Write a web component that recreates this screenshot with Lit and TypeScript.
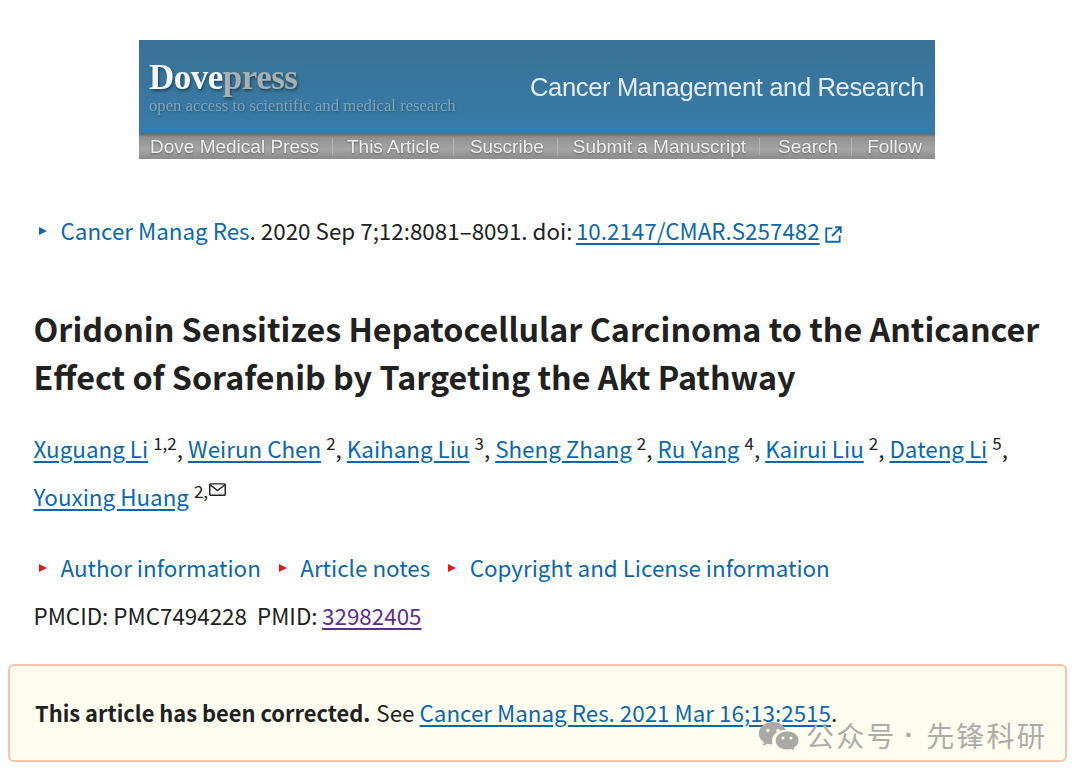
import { LitElement, css, html } from 'lit';
import { customElement } from 'lit/decorators.js';

const authors = [
	['Xuguang Li', '1,2'],
	['Weirun Chen', '2'],
	['Kaihang Liu', '3'],
	['Sheng Zhang', '2'],
	['Ru Yang', '4'],
	['Kairui Liu', '2'],
	['Dateng Li', '5'],
];

@customElement('app-root')
export class AppRoot extends LitElement {
	protected arrow(red = false) {
		return html`<span class="arrow ${red ? 'red' : ''}"></span>`;
	}

	protected banner() {
		const nav = ['Dove Medical Press', 'This Article', 'Suscribe', 'Submit a Manuscript', 'Search', 'Follow'];
		return html`<div class="banner">
			<div class="banner-top">
				<div class="brand">
					<div class="logo"><span>Dove</span><span class="press">press</span></div>
					<div class="tagline">open access to scientific and medical research</div>
				</div>
				<div class="journal">Cancer Management and Research</div>
			</div>
			<div class="banner-nav">${nav.map((n) => html`<span>${n}</span>`)}</div>
		</div>`;
	}

	render() {
		return html`<div class="page">
			${this.banner()}
			<div class="citation">
				${this.arrow()}<a class="plain">Cancer Manag Res</a>. 2020 Sep 7;12:8081–8091. doi:&nbsp;<a class="doi">10.2147/CMAR.S257482</a>
				<svg class="ext" viewBox="0 0 16 16" width="17" height="17" fill="none" stroke="#0a68ae" stroke-width="1.7">
					<path d="M7 2.200H1.200v12.600h12.600V9" />
					<path d="M9.500 1.200h5.300v5.300M14.600 1.400 6.500 9.500" />
				</svg>
			</div>
			<h1>Oridonin Sensitizes Hepatocellular Carcinoma to the Anticancer Effect of Sorafenib by Targeting the Akt Pathway</h1>
			<div class="authors">
				${authors.map(([n, s]) => html`<a>${n}</a> <sup>${s}</sup>, `)}
				<a>Youxing Huang</a> <sup>2,<svg class="mail" viewBox="0 0 16 12" width="17" height="13" fill="none" stroke="#212121" stroke-width="1.4">
					<rect x="0.7" y="0.7" width="14.6" height="10.6" rx="0.8" />
					<path d="M1 1.500l7 5.500 7-5.500" />
				</svg></sup>
			</div>
			<div class="meta">
				<span class="item">${this.arrow(true)}<a class="plain">Author information</a></span>
				<span class="item">${this.arrow(true)}<a class="plain">Article notes</a></span>
				<span class="item">${this.arrow(true)}<a class="plain">Copyright and License information</a></span>
			</div>
			<div class="ids">PMCID: PMC7494228&nbsp; PMID: <a class="visited">32982405</a></div>
			<div class="notice">
				<b>This article has been corrected.</b> See <a>Cancer Manag Res. 2021 Mar 16;13:2515</a>.
			</div>
			<div class="watermark">
				<svg viewBox="0 0 42 30" width="42" height="30" fill="#a9a9a5">
					<path d="M15 1C7 1 .8 6 .8 12.500c0 3.700 2 6.700 5.300 8.900L4.800 25l4.600-2.300c1.800.5 3.500.7 5.200.7-.4-1.200-.6-2.300-.6-3.500 0-6 5.600-10.800 12.600-10.800h1C26.300 4.500 21.200 1 15 1z" />
					<path d="M41 19.500c0-5.500-5.400-9.500-11.800-9.500-6.800 0-12 4.200-12 9.500s5.200 9.500 12 9.500c1.400 0 2.800-.2 4-.6l3.800 2-1-3.200c3.100-2 5-4.800 5-7.700z" stroke="#fffdf0" stroke-width="1" />
					<circle cx="10" cy="9.500" r="1.800" fill="#fffdf0" />
					<circle cx="20" cy="9.500" r="1.800" fill="#fffdf0" />
					<circle cx="25" cy="17" r="1.500" fill="#fffdf0" />
					<circle cx="33" cy="17" r="1.500" fill="#fffdf0" />
				</svg>
				<span class="mark">公众号</span>
				<span class="dot">·</span>
				<span class="mark">先锋科研</span>
			</div>
		</div>`;
	}

	static styles = css`
		:host {
			display: block;
			background: #fff;
		}

		* {
			box-sizing: border-box;
		}

		.page {
			position: relative;
			height: 779px;
			padding: 40px 12px 0 33.5px;
			font-family: 'Noto Sans CJK SC', 'Noto Sans', sans-serif;
			font-size: 22.4px;
			line-height: 48px;
			color: #212121;
			overflow: hidden;
		}

		a {
			color: #0a68ae;
			text-decoration: underline;
			text-decoration-thickness: 2px;
			text-underline-offset: 3px;
		}

		a.plain {
			text-decoration: none;
		}

		a.visited {
			margin-left: -0.5px;
			color: #5b2e91;
		}

		a.doi {
			margin-left: -1.5px;
		}

		.banner {
			width: 796px;
			height: 119px;
			margin-left: 105.5px;
			display: flex;
			flex-direction: column;
			font-family: 'Liberation Sans', sans-serif;
			line-height: 1;
		}

		.banner-top {
			flex: 1;
			display: flex;
			justify-content: space-between;
			padding: 20px 11px 0 10px;
			background: linear-gradient(#3a7196, #377ca8);
		}

		.logo {
			font-family: 'Liberation Serif', serif;
			font-size: 35px;
			font-weight: bold;
			color: #f4f7f8;
			letter-spacing: -0.5px;
			text-shadow: 1px 2px 3px rgba(0, 0, 0, 0.45);
			filter: blur(0.6px);
		}

		.press {
			color: #a9aeaf;
		}

		.tagline {
			margin-top: 3px;
			font-family: 'Liberation Serif', serif;
			font-size: 16.700px;
			color: #7fa3b8;
			text-shadow: 1px 1px 2px rgba(0, 0, 0, 0.25);
			filter: blur(0.6px);
		}

		.journal {
			margin-top: 15px;
			font-size: 25.600px;
			letter-spacing: -0.38px;
			color: #e3edf2;
			filter: blur(0.6px);
		}

		.banner-nav {
			height: 25px;
			display: flex;
			align-items: center;
			padding-left: 11px;
			background: linear-gradient(#5f6a70 0, #8f8f8f 3px, #a5a5a5 60%, #8b8b8b);
			font-size: 19px;
			color: #eee;
			text-shadow: 0 1px 2px rgba(0, 0, 0, 0.4);
			filter: blur(0.5px);
			white-space: nowrap;
		}

		.banner-nav span + span {
			margin-left: 13px;
			padding-left: 15px;
			border-left: 1px solid #b5b5b5;
			line-height: 17px;
		}

		.banner-nav span:nth-child(2) {
			padding-left: 14px;
		}

		.banner-nav span:nth-child(3) {
			padding-left: 16px;
		}

		.banner-nav span:nth-child(5) {
			padding-left: 18px;
		}

		.citation {
			margin-top: 47px;
			white-space: nowrap;
		}

		.arrow {
			display: inline-block;
			width: 0;
			height: 0;
			margin: 0 13.5px 5px 5.5px;
			vertical-align: middle;
			border-style: solid;
			border-width: 4.500px 0 4.500px 8px;
			border-color: transparent transparent transparent #0a68ae;
		}

		.arrow.red {
			border-left-color: #e81818;
		}

		.ext {
			vertical-align: -3px;
		}

		h1 {
			margin: 50px 0 0;
			font-size: 32.26px;
			line-height: 48px;
			font-weight: 700;
			color: #212121;
		}

		.authors {
			margin-top: 24px;
		}

		sup {
			font-size: 17px;
			line-height: 0;
			vertical-align: 8px;
		}

		.mail {
			margin-left: 1px;
			vertical-align: 2px;
		}

		.meta {
			margin-top: 23px;
			display: flex;
			gap: 12.5px;
		}

		.notice {
			position: absolute;
			left: 8px;
			top: 664px;
			width: 1059px;
			height: 98px;
			padding: 22px 25px;
			background: #fffdf0;
			border: 2px solid #f4c4ae;
			border-radius: 6px;
		}

		.notice b {
			margin-right: 1px;
			font-size: 21.85px;
			font-weight: 700;
		}

		.watermark {
			position: absolute;
			left: 758px;
			top: 720px;
			display: flex;
			align-items: center;
			font-size: 28px;
			line-height: 30px;
			letter-spacing: 2.200px;
			color: #acacaa;
			white-space: nowrap;
		}

		.watermark svg {
			margin-right: 6px;
		}

		.mark {
			margin-bottom: 2px;
		}

		.dot {
			margin: 0 10px 2px 8px;
			font-family: 'Liberation Sans', sans-serif;
			font-weight: bold;
		}
	`;
}
